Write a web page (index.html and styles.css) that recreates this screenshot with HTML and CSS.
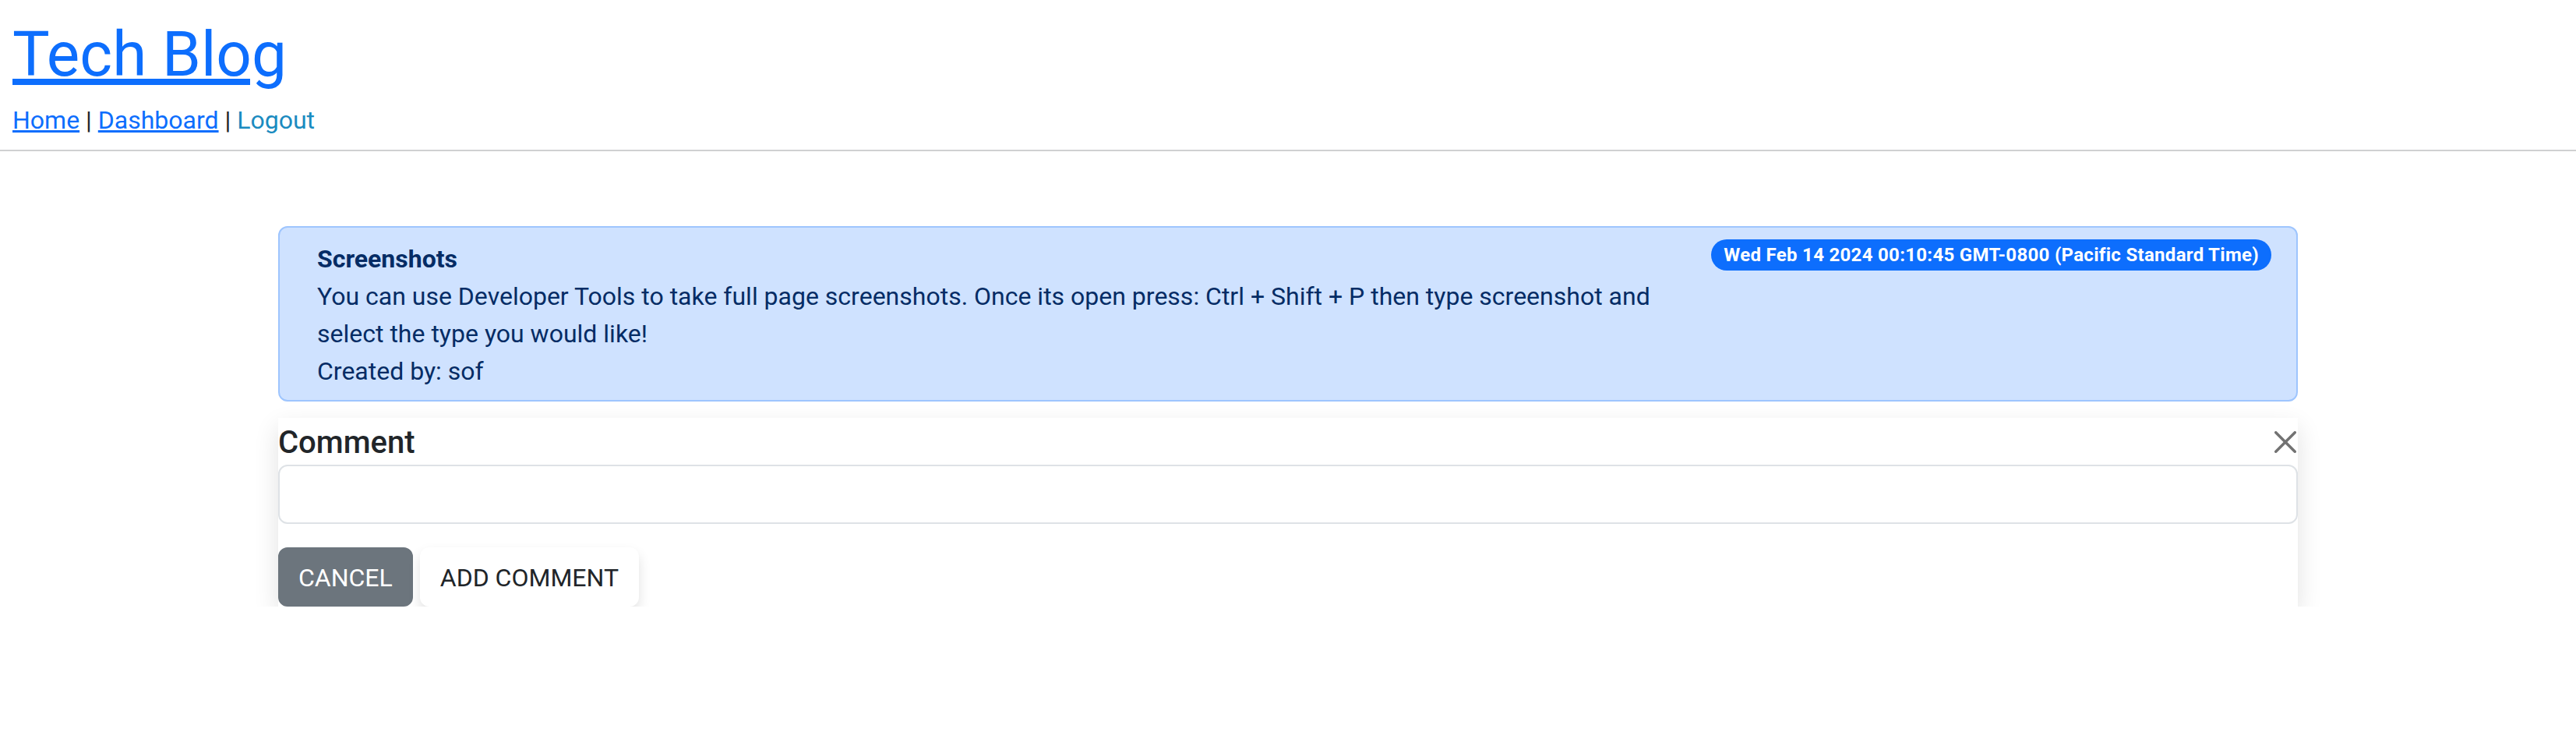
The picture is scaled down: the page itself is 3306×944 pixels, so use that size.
FILE: index.html
```html
<!DOCTYPE html>
<html lang="en">
<head>
<meta charset="utf-8">
<title>Tech Blog</title>
<link rel="stylesheet" href="styles.css">
</head>
<body>
<header class="site-header">
  <h1 class="brand"><a href="#">Tech Blog</a></h1>
  <nav class="nav"><a href="#">Home</a> | <a href="#">Dashboard</a> | <span class="logout">Logout</span></nav>
</header>
<main class="container">
  <div class="post">
    <div class="post-body">
      <div class="post-title">Screenshots</div>
      <div class="post-text">You can use Developer Tools to take full page screenshots. Once its open press: Ctrl + Shift + P then type screenshot and select the type you would like!</div>
      <div class="post-author">Created by: sof</div>
    </div>
    <span class="badge">Wed Feb 14 2024 00:10:45 GMT-0800 (Pacific Standard Time)</span>
  </div>
  <form class="comment-form">
    <div class="comment-head">
      <label class="comment-label" for="comment">Comment</label>
      <button class="close-btn" type="button" aria-label="Close">
        <svg viewBox="0 0 16 16" width="28" height="28"><path d="M.293.293a1 1 0 0 1 1.414 0L8 6.586 14.293.293a1 1 0 1 1 1.414 1.414L9.414 8l6.293 6.293a1 1 0 0 1-1.414 1.414L8 9.414l-6.293 6.293a1 1 0 0 1-1.414-1.414L6.586 8 .293 1.707a1 1 0 0 1 0-1.414z"/></svg>
      </button>
    </div>
    <input class="comment-input" id="comment" type="text">
    <div class="actions">
      <button class="btn btn-cancel" type="button">CANCEL</button>
      <button class="btn btn-add" type="submit">ADD COMMENT</button>
    </div>
  </form>
</main>
</body>
</html>
```
FILE: styles.css
```css
html, body {
  margin: 0;
  padding: 0;
  background: #fff;
}
body {
  font-family: Roboto, "Liberation Sans", Arial, sans-serif;
  color: #212529;
  font-size: 32px;
  line-height: 48px;
}
a {
  color: #0d6efd;
}
.site-header {
  padding: 22px 16px 14px;
  border-bottom: 2px solid #cfd0d1;
}
.brand {
  margin: 0 0 12px;
  font-size: 80px;
  line-height: 96px;
  font-weight: 400;
}
.nav {
  font-size: 32px;
  line-height: 48px;
}
.logout {
  color: #1b8bc0;
}
.container {
  width: 2592px;
  margin: 96px auto 0;
}
.post {
  display: flex;
  justify-content: space-between;
  align-items: flex-start;
  background: #cfe2ff;
  border: 2px solid #9ec5fe;
  border-radius: 12px;
  padding: 16px 32px 13px;
  color: #052c65;
}
.post-body {
  margin-left: 16px;
  margin-right: auto;
}
.post-title {
  font-weight: 700;
}
.badge {
  flex: none;
  margin-top: -1px;
  background: #0d6efd;
  color: #fff;
  font-size: 24px;
  font-weight: 700;
  letter-spacing: 0.3px;
  line-height: 1;
  padding: 8px 16px;
  border-radius: 999px;
  white-space: nowrap;
}
.comment-form {
  margin-top: 21px;
  background: #fff;
  box-shadow: 0 12px 30px rgba(0, 0, 0, 0.12);
}
.comment-head {
  display: flex;
  justify-content: space-between;
  align-items: center;
  padding-top: 8px;
  margin-bottom: 4px;
}
.comment-label {
  font-size: 40px;
  line-height: 48px;
  font-weight: 500;
  color: #212529;
}
.close-btn {
  border: 0;
  background: transparent;
  padding: 0;
  margin: -2px 2px 0 0;
  width: 28px;
  height: 28px;
  display: flex;
}
.close-btn svg {
  fill: #000;
  opacity: 0.55;
}
.comment-input {
  display: block;
  box-sizing: border-box;
  width: 100%;
  height: 76px;
  margin: 0;
  border: 2px solid #dee2e6;
  border-radius: 12px;
  font: inherit;
  padding: 12px 24px;
}
.actions {
  display: flex;
  gap: 9px;
  margin-top: 30px;
}
.btn {
  font-family: inherit;
  font-size: 32px;
  line-height: 48px;
  padding: 13px 24px 11px;
  border: 2px solid transparent;
  border-radius: 12px;
  margin: 0;
}
.btn-cancel {
  background: #6c757d;
  border-color: #6c757d;
  color: #fff;
}
.btn-add {
  background: #fff;
  color: #212529;
  box-shadow: 0 8px 16px rgba(0, 0, 0, 0.12);
}
```
